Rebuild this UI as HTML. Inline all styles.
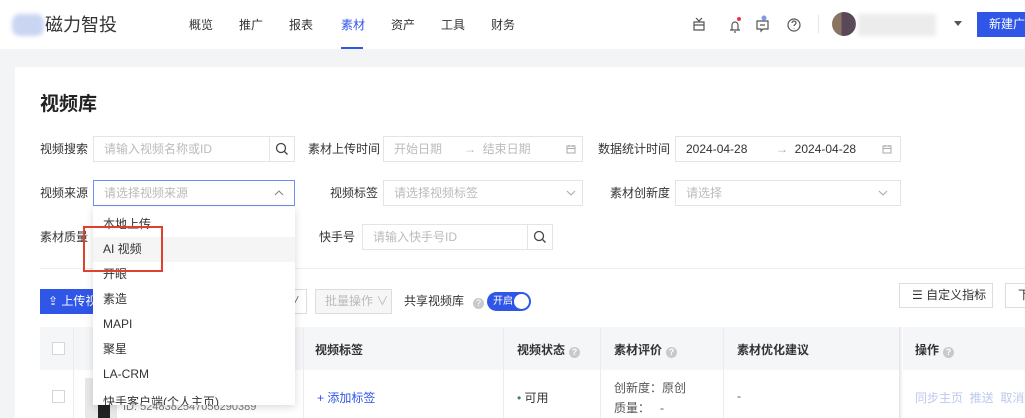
<!DOCTYPE html>
<html><head><meta charset="utf-8"><style>
*{box-sizing:border-box;margin:0;padding:0}
body{width:1025px;height:418px;overflow:hidden;background:#f3f4f6;font-family:"Liberation Sans","Noto Sans CJK SC",sans-serif;font-size:12px;color:#333;position:relative}
.a{position:absolute;white-space:nowrap}
.inp{position:absolute;border:1px solid #e3e4e8;background:#fff;height:26px;color:#bbb;font-size:12px;line-height:24px;padding-left:10px}
.lbl{position:absolute;font-size:12px;color:#333;line-height:26px}
.hd{font-size:12px;color:#333;font-weight:bold}
.q{display:inline-block;width:11px;height:11px;border-radius:50%;background:#c8c9cc;color:#fff;font-size:9px;text-align:center;line-height:11px;vertical-align:-1px;margin-left:4px}
.chev{position:absolute;top:9px}
</style></head><body>
<div class="a" style="left:0;top:0;width:1025px;height:49px;background:#fff"></div>
<div class="a" style="left:12px;top:14px;width:32px;height:22px;border-radius:8px;background:#c9d5f2;filter:blur(2px)"></div>
<div class="a" style="left:45px;top:12px;font-size:18px;color:#333;line-height:26px">磁力智投</div>
<div class="a" style="left:189px;top:17px;line-height:16px">概览</div>
<div class="a" style="left:239px;top:17px;line-height:16px">推广</div>
<div class="a" style="left:289px;top:17px;line-height:16px">报表</div>
<div class="a" style="left:341px;top:17px;line-height:16px;color:#3056e8">素材</div>
<div class="a" style="left:341px;top:47px;width:22px;height:2px;background:#3056e8"></div>
<div class="a" style="left:391px;top:17px;line-height:16px">资产</div>
<div class="a" style="left:441px;top:17px;line-height:16px">工具</div>
<div class="a" style="left:491px;top:17px;line-height:16px">财务</div>
<svg class="a" style="left:690px;top:14px" width="120" height="22" fill="none" stroke="#555" stroke-width="1.2">
<path d="M4 8h10v8H4zM6 4l3 3 3-3M4 11h10"/>
<path d="M40 16h10M42 16v-5a3 3 0 016 0v5M44 18h2"/><circle cx="49" cy="5" r="2" fill="#e34" stroke="none"/>
<path d="M67 7h11v8h-5l-2 2v-2h-4z M70 11h5"/><circle cx="74" cy="4" r="2.5" fill="#7d9af0" stroke="none"/>
<circle cx="104" cy="11" r="6"/><path d="M102 9a2 2 0 114 0c0 1.5-2 1.5-2 3M104 14v.5"/>
</svg>
<div class="a" style="left:818px;top:15px;width:1px;height:18px;background:#e5e5e5"></div>
<div class="a" style="left:832px;top:12px;width:24px;height:24px;border-radius:50%;background:linear-gradient(90deg,#8a7560 40%,#5a4858 40%)"></div>
<div class="a" style="left:858px;top:14px;width:78px;height:22px;background:#ececec;filter:blur(2px)"></div>
<div class="a" style="left:954px;top:21px;border:4px solid transparent;border-top:5px solid #555"></div>
<div class="a" style="left:977px;top:12px;width:60px;height:25px;background:#3056e8;color:#fff;font-size:12px;line-height:25px;padding-left:12px">新建广告</div>
<div class="a" style="left:15px;top:67px;width:1010px;height:351px;background:#fff"></div>
<div class="a" style="left:40px;top:93px;font-size:19px;font-weight:bold;color:#222;line-height:24px">视频库</div>
<div class="lbl" style="left:40px;top:136px">视频搜索</div>
<div class="inp" style="left:93px;top:136px;width:202px">请输入视频名称或ID</div>
<div class="a" style="left:269px;top:136px;width:26px;height:26px;border:1px solid #e3e4e8;background:#fff"></div>
<svg class="a" style="left:275px;top:142px" width="14" height="14" fill="none" stroke="#444" stroke-width="1.3"><circle cx="6" cy="6" r="4.5"/><path d="M9.5 9.5l3 3"/></svg>
<div class="lbl" style="left:308px;top:136px">素材上传时间</div>
<div class="inp" style="left:383px;top:136px;width:200px">开始日期<span style="position:absolute;left:80px">→ &nbsp;结束日期</span><svg style="position:absolute;left:182px;top:7px" width="10" height="10" fill="none" stroke="#aaa"><path d="M1 2h8v7H1zM1 4.5h8M3 1v2M7 1v2"/></svg></div>
<div class="lbl" style="left:598px;top:136px">数据统计时间</div>
<div class="inp" style="left:675px;top:136px;width:226px;color:#333">2024-04-28<span style="position:absolute;left:100px"><span style="color:#aaa">→</span> &nbsp;2024-04-28</span><svg style="position:absolute;left:206px;top:7px" width="10" height="10" fill="none" stroke="#aaa"><path d="M1 2h8v7H1zM1 4.5h8M3 1v2M7 1v2"/></svg></div>
<div class="lbl" style="left:40px;top:180px">视频来源</div>
<div class="inp" style="left:93px;top:180px;width:202px;border-color:#6f8ff0">请选择视频来源<svg class="chev" style="left:180px" width="10" height="6" fill="none" stroke="#888" stroke-width="1.1"><path d="M1 5l4-4 4 4"/></svg></div>
<div class="lbl" style="left:330px;top:180px">视频标签</div>
<div class="inp" style="left:383px;top:180px;width:200px">请选择视频标签<svg class="chev" style="left:182px" width="10" height="6" fill="none" stroke="#aaa" stroke-width="1.1"><path d="M1 1l4 4 4-4"/></svg></div>
<div class="lbl" style="left:610px;top:180px">素材创新度</div>
<div class="inp" style="left:675px;top:180px;width:226px">请选择<svg class="chev" style="left:202px" width="10" height="6" fill="none" stroke="#aaa" stroke-width="1.1"><path d="M1 1l4 4 4-4"/></svg></div>
<div class="lbl" style="left:40px;top:224px">素材质量</div>
<div class="lbl" style="left:319px;top:224px">快手号</div>
<div class="inp" style="left:362px;top:224px;width:191px">请输入快手号ID</div>
<div class="a" style="left:527px;top:224px;width:26px;height:26px;border:1px solid #e3e4e8;background:#fff"></div>
<svg class="a" style="left:533px;top:230px" width="14" height="14" fill="none" stroke="#444" stroke-width="1.3"><circle cx="6" cy="6" r="4.5"/><path d="M9.5 9.5l3 3"/></svg>
<div class="a" style="left:40px;top:268px;width:985px;height:1px;background:#eceef1"></div>
<div class="a" style="left:40px;top:289px;width:70px;height:25px;background:#3056e8;color:#fff;line-height:25px;padding-left:8px">⇪ 上传视频</div>
<div class="a" style="left:250px;top:289px;width:57px;height:25px;border:1px solid #dcdde0;color:#666;line-height:23px;text-align:right;padding-right:6px">∨</div>
<div class="a" style="left:315px;top:289px;width:77px;height:25px;border:1px solid #dcdde0;background:#f6f6f7;color:#bbb;line-height:23px;padding-left:9px">批量操作 ∨</div>
<div class="a" style="left:404px;top:289px;line-height:25px">共享视频库<span class="q" style="margin-left:9px">?</span></div>
<div class="a" style="left:487px;top:292px;width:44px;height:19px;border-radius:10px;background:#3056e8;color:#fff;font-size:10px;line-height:19px;padding-left:6px">开启<span style="position:absolute;right:2px;top:2px;width:15px;height:15px;border-radius:50%;background:#fff"></span></div>
<div class="a" style="left:899px;top:283px;width:94px;height:25px;border:1px solid #dcdde0;line-height:23px;padding-left:12px">☰ 自定义指标</div>
<div class="a" style="left:1005px;top:283px;width:30px;height:25px;border:1px solid #dcdde0;line-height:23px;padding-left:12px">下</div>
<div class="a" style="left:40px;top:327px;width:985px;height:43px;background:#f5f6f8"></div>
<div class="a" style="left:52px;top:342px;width:13px;height:13px;border:1px solid #d5d6d9;background:#fff"></div>
<div class="a" style="left:52px;top:390px;width:13px;height:13px;border:1px solid #d5d6d9;background:#fff"></div>
<div class="a" style="left:73px;top:327px;width:1px;height:91px;background:#ebecef"></div>
<div class="a" style="left:303px;top:327px;width:1px;height:91px;background:#ebecef"></div>
<div class="a" style="left:503px;top:327px;width:1px;height:91px;background:#ebecef"></div>
<div class="a" style="left:600px;top:327px;width:1px;height:91px;background:#ebecef"></div>
<div class="a" style="left:723px;top:327px;width:1px;height:91px;background:#ebecef"></div>
<div class="a" style="left:899px;top:327px;width:4px;height:91px;background:linear-gradient(90deg,#e3e4e7,#fff)"></div>
<div class="a hd" style="left:315px;top:341px">视频标签</div>
<div class="a hd" style="left:517px;top:341px">视频状态<span class="q">?</span></div>
<div class="a hd" style="left:614px;top:341px">素材评价<span class="q">?</span></div>
<div class="a hd" style="left:737px;top:341px">素材优化建议</div>
<div class="a hd" style="left:915px;top:341px">操作<span class="q">?</span></div>
<div class="a" style="left:85px;top:378px;width:32px;height:40px;background:#e8e8e8"></div>
<div class="a" style="left:98px;top:400px;width:12px;height:18px;background:#222"></div>
<div class="a" style="left:123px;top:401px;color:#777;font-size:11px">ID: 5248382547056290389</div>
<div class="a" style="left:317px;top:389px;color:#3056e8">+ 添加标签</div>
<div class="a" style="left:517px;top:389px"><span style="color:#3a8a5a">•</span> 可用</div>
<div class="a" style="left:614px;top:379px;color:#555">创新度：原创</div>
<div class="a" style="left:614px;top:399px;color:#555">质量： &nbsp;&nbsp;-</div>
<div class="a" style="left:737px;top:389px;color:#555">-</div>
<div class="a" style="left:915px;top:389px;color:#bcc9ee">同步主页 &nbsp;推送 &nbsp;取消推</div>
<div class="a" style="left:93px;top:207px;width:202px;height:198px;background:#fff;box-shadow:0 2px 8px rgba(0,0,0,.15);overflow:hidden;font-size:12px;color:#333">
<div style="height:30px;line-height:34px;padding-left:10px">本地上传</div>
<div style="height:25px;line-height:25px;padding-left:10px;background:#f5f5f6">AI 视频</div>
<div style="height:25px;line-height:25px;padding-left:10px">开眼</div>
<div style="height:25px;line-height:25px;padding-left:10px">素造</div>
<div style="height:25px;line-height:25px;padding-left:10px">MAPI</div>
<div style="height:25px;line-height:25px;padding-left:10px">聚星</div>
<div style="height:25px;line-height:25px;padding-left:10px">LA-CRM</div>
<div style="height:25px;line-height:30px;padding-left:10px">快手客户端(个人主页)</div>
</div>
<div class="a" style="left:83px;top:226px;width:80px;height:46px;border:2px solid #e0402c"></div>
</body></html>
